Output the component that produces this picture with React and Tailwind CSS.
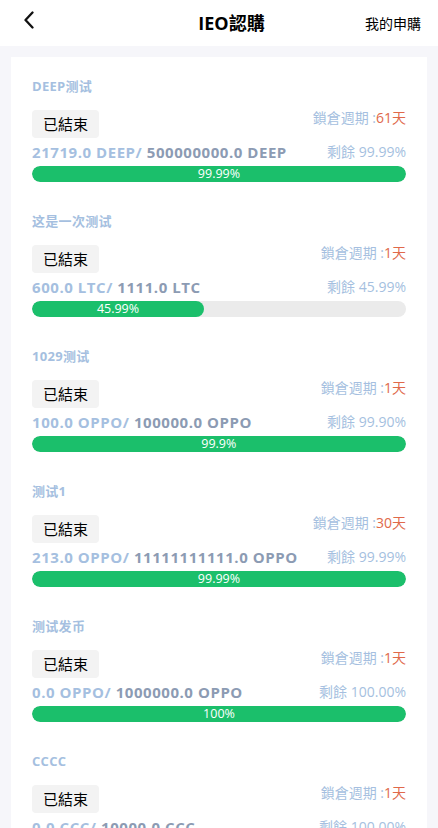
import React from 'react';

const items = [
  { name: 'DEEP测试', days: '61', sold: '21719.0 DEEP/', total: '500000000.0 DEEP', left: '99.99%', pct: 99.99, label: '99.99%' },
  { name: '这是一次测试', days: '1', sold: '600.0 LTC/', total: '1111.0 LTC', left: '45.99%', pct: 45.99, label: '45.99%' },
  { name: '1029测试', days: '1', sold: '100.0 OPPO/', total: '100000.0 OPPO', left: '99.90%', pct: 99.9, label: '99.9%' },
  { name: '测试1', days: '30', sold: '213.0 OPPO/', total: '11111111111.0 OPPO', left: '99.99%', pct: 99.99, label: '99.99%' },
  { name: '测试发币', days: '1', sold: '0.0 OPPO/', total: '1000000.0 OPPO', left: '100.00%', pct: 100, label: '100%' },
  { name: 'CCCC', days: '1', sold: '0.0 CCC/', total: '10000.0 CCC', left: '100.00%', pct: 100, label: '100%' },
];

function Item({ item }) {
  return (
    <div className="pt-5 pb-[10px]">
      <div className="text-[13px] leading-[18px] font-bold text-[#a5bfe0] tracking-[0.3px]">{item.name}</div>
      <div className="mt-[15px] flex items-start justify-between">
        <div className="h-7 w-[67px] rounded-sm bg-[#f3f3f3] flex items-center justify-center text-[15px] text-black">
          已結束
        </div>
        <div className="text-[14px] leading-5 text-[#a5bfe0] -mt-[2px]">
          鎖倉週期 :<span className="text-[#e0694a]">{item.days}天</span>
        </div>
      </div>
      <div className="mt-1 flex items-center justify-between h-5">
        <div className="text-[15px] font-bold leading-5 tracking-[0.55px]">
          <span className="text-[#a5bfe0]">{item.sold} </span>
          <span className="text-[#8c9bb3]">{item.total}</span>
        </div>
        <div className="text-[14px] leading-5 text-[#a5bfe0]">剩餘 {item.left}</div>
      </div>
      <div className="mt-1 h-4 rounded-full bg-[#ebebeb] overflow-hidden">
        <div
          className="h-4 rounded-full bg-[#1bbf6b] flex items-center justify-center text-[12.5px] leading-4 text-white"
          style={{ width: `${item.pct}%` }}
        >
          {item.label}
        </div>
      </div>
    </div>
  );
}

export default function App() {
  return (
    <div
      className="min-h-screen bg-[#f6f6fa]"
      style={{ fontFamily: '"Open Sans", "Noto Sans CJK SC", sans-serif' }}
    >
      <div className="h-[46px] bg-white flex items-center justify-between pl-[24px] pr-[17px] relative">
        <svg width="10" height="18" viewBox="0 0 10 18" fill="none" className="-mt-[7px]">
          <path d="M8.5 1.5 L1.5 9 L8.5 16.5" stroke="#111" strokeWidth="2.3" strokeLinecap="round" strokeLinejoin="round" />
        </svg>
        <div className="absolute left-[25px] right-0 text-center text-[18px] font-bold text-black pointer-events-none">
          IEO認購
        </div>
        <div className="text-[14px] text-black">我的申購</div>
      </div>
      <div className="mx-[11px] mt-[11px] bg-white px-[21px]">
        {items.map((item, i) => (
          <Item key={i} item={item} />
        ))}
      </div>
    </div>
  );
}
